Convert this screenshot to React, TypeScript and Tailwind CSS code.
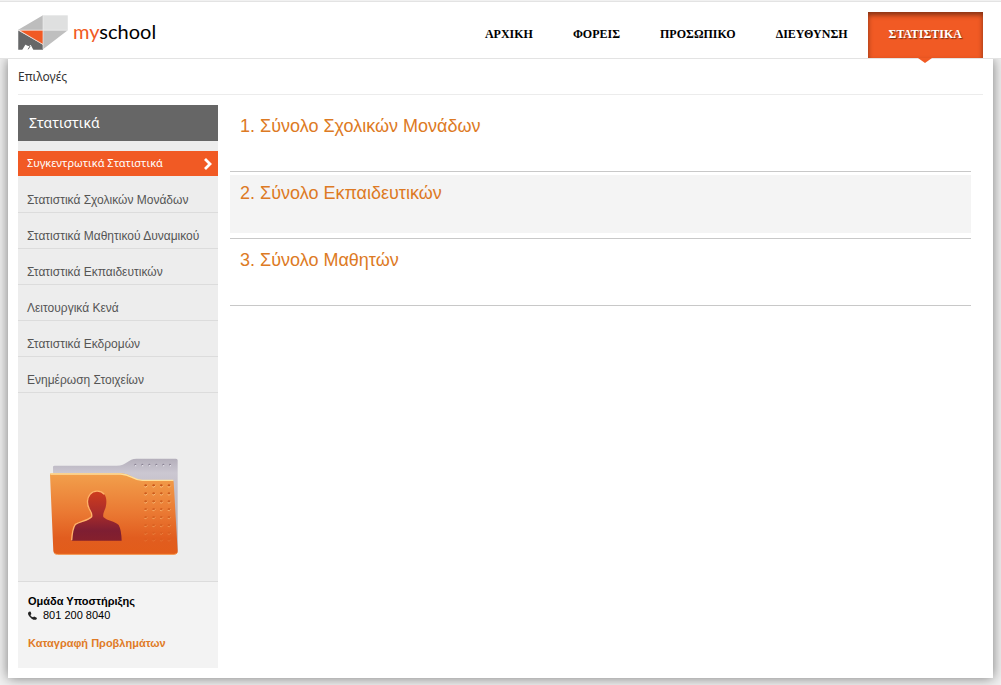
const navItems = ["ΑΡΧΙΚΗ", "ΦΟΡΕΙΣ", "ΠΡΟΣΩΠΙΚΟ", "ΔΙΕΥΘΥΝΣΗ"];

const menuItems = [
  "Στατιστικά Σχολικών Μονάδων",
  "Στατιστικά Μαθητικού Δυναμικού",
  "Στατιστικά Εκπαιδευτικών",
  "Λειτουργικά Κενά",
  "Στατιστικά Εκδρομών",
  "Ενημέρωση Στοιχείων",
];

const reports = [
  { title: "1. Σύνολο Σχολικών Μονάδων", shaded: false },
  { title: "2. Σύνολο Εκπαιδευτικών", shaded: true },
  { title: "3. Σύνολο Μαθητών", shaded: false },
];

function LogoMark() {
  return (
    <svg viewBox="54 45 150 106" className="h-[35px] w-[50px]" aria-hidden="true">
      <path d="M54 90 129 46V91H54Z" fill="#bdbdbd" />
      <path d="M129 46H204V91H129Z" fill="#dfe0e0" />
      <path d="M129 91H204L129 149Z" fill="#bfbfbf" />
      <path d="M54 92 129 135V150H54Z" fill="#666768" />
      <path d="M66 151 76 134 85 138 92 136 100 151Z" fill="#fff" />
      <path d="M76 134 90 139 84 149" fill="none" stroke="#666768" strokeWidth="3" />
      <path d="M56 91H129V134Z" fill="#f15a24" />
      <path d="M54 91H129V149M129 91V46M56 91 129 134M129 91H204" fill="none" stroke="#eee" strokeWidth="2" />
    </svg>
  );
}

function FolderPicture() {
  const rows = [122, 146, 170, 193, 217, 241, 264, 284];
  const cols = [347, 371, 394, 417];
  const tabDots = [316, 337, 358, 379, 400, 420];
  return (
    <svg viewBox="60 36 384 294" className="h-[98px] w-32" aria-hidden="true">
      <defs>
        <linearGradient id="front" x1="0" y1="0" x2="0" y2="1">
          <stop offset="0" stopColor="#f2a04c" />
          <stop offset="0.5" stopColor="#ea7832" />
          <stop offset="0.8" stopColor="#e15d1f" />
          <stop offset="1" stopColor="#e25c1a" />
        </linearGradient>
        <linearGradient id="back" x1="0" y1="0" x2="0" y2="1">
          <stop offset="0" stopColor="#b4afbb" />
          <stop offset="0.15" stopColor="#cbc7d1" />
          <stop offset="1" stopColor="#aaa5b0" />
        </linearGradient>
        <linearGradient id="person" x1="0" y1="0" x2="0" y2="1">
          <stop offset="0" stopColor="#cf3c1d" />
          <stop offset="0.45" stopColor="#a92c2b" />
          <stop offset="0.8" stopColor="#7e1e32" />
          <stop offset="1" stopColor="#85202c" />
        </linearGradient>
      </defs>
      <path d="M69 66Q69 62 74 62H260C290 62 294 41 320 41H438Q443 41 443 46V316Q443 325 434 325H80Q72 325 72 316Z" fill="url(#back)" />
      <path d="M60 88Q60 85 64 85H272C305 86 308 105 337 105H426Q431 105 431 110L443 319Q443 327 434 327H80Q71 327 70 318Z" fill="url(#front)" />
      <path d="M61 87H272C305 88 308 106 337 106H430" fill="none" stroke="#ffe09a" strokeWidth="4" />
      <path d="M73 324Q76 328 82 328H432Q439 328 442 323" fill="none" stroke="#f58a3c" strokeWidth="3" />
      <path d="M125 287Q127 251 136 238C150 229 173 227 185 215C187 207 183 200 178 192C169 176 172 158 180 148C190 136 211 134 223 148C232 160 229 178 227 187C223 199 218 206 220 216C232 228 255 228 266 240Q274 254 275 287Z" fill="url(#person)" />
      <path d="M125 286Q127 251 136 238C150 229 173 227 185 215C187 207 183 200 178 192C169 176 172 158 180 148C190 136 211 134 223 148" fill="none" stroke="#ffb36a" strokeWidth="4" />
      {tabDots.map((x) => (
        <g key={x}>
          <circle cx={x} cy="59" r="3" fill="#8b8495" />
          <circle cx={x + 1} cy="62" r="2" fill="#f0eef4" />
        </g>
      ))}
      {rows.map((y, i) =>
        cols.map((x) => (
          <g key={`${x}-${y}`} opacity={1 - i * 0.12}>
            <circle cx={x} cy={y} r="4" fill="#c95518" />
            <path d={`M${x - 4} ${y + 3}Q${x + 2} ${y + 7} ${x + 5} ${y}`} fill="none" stroke="#ffc783" strokeWidth="3" />
          </g>
        )),
      )}
    </svg>
  );
}

function PhoneIcon() {
  return (
    <svg viewBox="0 0 27 27" className="size-[9px]" aria-hidden="true">
      <path
        d="M2 3Q5 0 8 2L10 8Q10 10 7 12Q9 17 15 19Q18 16 20 17L26 20Q28 23 24 26Q19 28 11 23Q2 17 0 9Q0 5 2 3Z"
        fill="#222"
      />
    </svg>
  );
}

export default function App() {
  return (
    <div className="flex min-h-screen flex-col overflow-hidden bg-[#f1f1f1] font-['Liberation_Sans',sans-serif] text-[#333]">
      <header className="relative z-10 mt-px flex h-[58px] justify-between border-y border-[#e3e3e3] bg-white px-[18px]">
        <a href="#home" className="flex items-center gap-[5px] pt-1 font-[Lato,sans-serif] text-[20px] leading-6 text-black">
          <LogoMark />
          <span className="pb-[2px]">
            <span className="text-[#f15a24]">my</span>school
          </span>
        </a>
        <nav className="flex pt-[10px] font-['Liberation_Serif',serif] text-[12px] font-bold text-black">
          {navItems.map((item) => (
            <a key={item} href="#section" className="flex h-[46px] items-center px-5 pb-[2px]">
              {item}
            </a>
          ))}
          <a
            href="#statistics"
            aria-current="page"
            className="relative flex h-[46px] items-center bg-[#f15a24] px-[21px] pb-[2px] text-white shadow-[inset_0_3px_5px_rgba(0,0,0,0.45)] [text-shadow:1px_1px_1px_rgba(0,0,0,0.5)]"
          >
            ΣΤΑΤΙΣΤΙΚΑ
            <svg viewBox="0 0 14 5" className="absolute top-full left-1/2 h-[5px] w-[14px] -translate-x-1/2" aria-hidden="true">
              <path d="M0 0H14L7 5Z" fill="#f15a24" />
            </svg>
          </a>
        </nav>
      </header>

      <div className="mx-2 mb-[7px] flex grow flex-col bg-white px-[10px] pb-[10px] shadow-[0_0_12px_rgba(0,0,0,0.5)]">
        <div className="h-9 border-b border-[#ececec] pt-[9px] font-['Noto_Sans',sans-serif] text-[12px] leading-[18px]">
          Επιλογές
        </div>

        <div className="flex grow gap-3 pt-[10px]">
          <aside className="flex w-[200px] shrink-0 flex-col bg-[#ededed]">
            <h1 className="mb-[10px] h-9 bg-[#666] px-[11px] font-['Noto_Sans',sans-serif] text-[14px] leading-9 text-white">
              Στατιστικά
            </h1>
            <nav className="text-[12px] text-[#555]">
              <a
                href="#summary"
                aria-current="page"
                className="mb-px flex h-[25px] items-center justify-between bg-[#f15a24] pr-[6px] pl-[9px] font-['Noto_Sans',sans-serif] text-[11px] text-white"
              >
                Συγκεντρωτικά Στατιστικά
                <svg viewBox="0 0 9 12" className="h-3 w-[9px]" aria-hidden="true">
                  <path d="M2 1 7 6 2 11" fill="none" stroke="#fff" strokeWidth="2.8" />
                </svg>
              </a>
              {menuItems.map((item) => (
                <a key={item} href="#report" className="block border-b border-[#dcdcdc] pt-[14px] pb-[3px] pl-[9px] leading-[18px]">
                  {item}
                </a>
              ))}
            </nav>
            <div className="pt-16 pb-[26px] pl-8">
              <FolderPicture />
            </div>
            <div className="grow border-t border-[#dcdcdc] bg-[#f3f3f3] px-[10px] pt-3 pb-[18px] text-[11px] leading-[14px] text-black">
              <p className="font-bold">Ομάδα Υποστήριξης</p>
              <p className="flex items-center gap-[6px]">
                <PhoneIcon />
                801 200 8040
              </p>
              <a href="#issues" className="mt-[14px] block font-bold text-[#e07b26]">
                Καταγραφή Προβλημάτων
              </a>
            </div>
          </aside>

          <main className="grow pr-3">
            {reports.map((report) => (
              <section key={report.title} className="border-b border-[#c8c8c8] pt-[3px] pb-[5px]">
                <div className={report.shaded ? "h-[58px] bg-[#f4f4f4] px-[10px]" : "h-[58px] px-[10px]"}>
                  <h2 className="text-[18px] leading-9 text-[#dd7a24]">
                    <a href="#details">{report.title}</a>
                  </h2>
                </div>
              </section>
            ))}
          </main>
        </div>
      </div>
    </div>
  );
}
